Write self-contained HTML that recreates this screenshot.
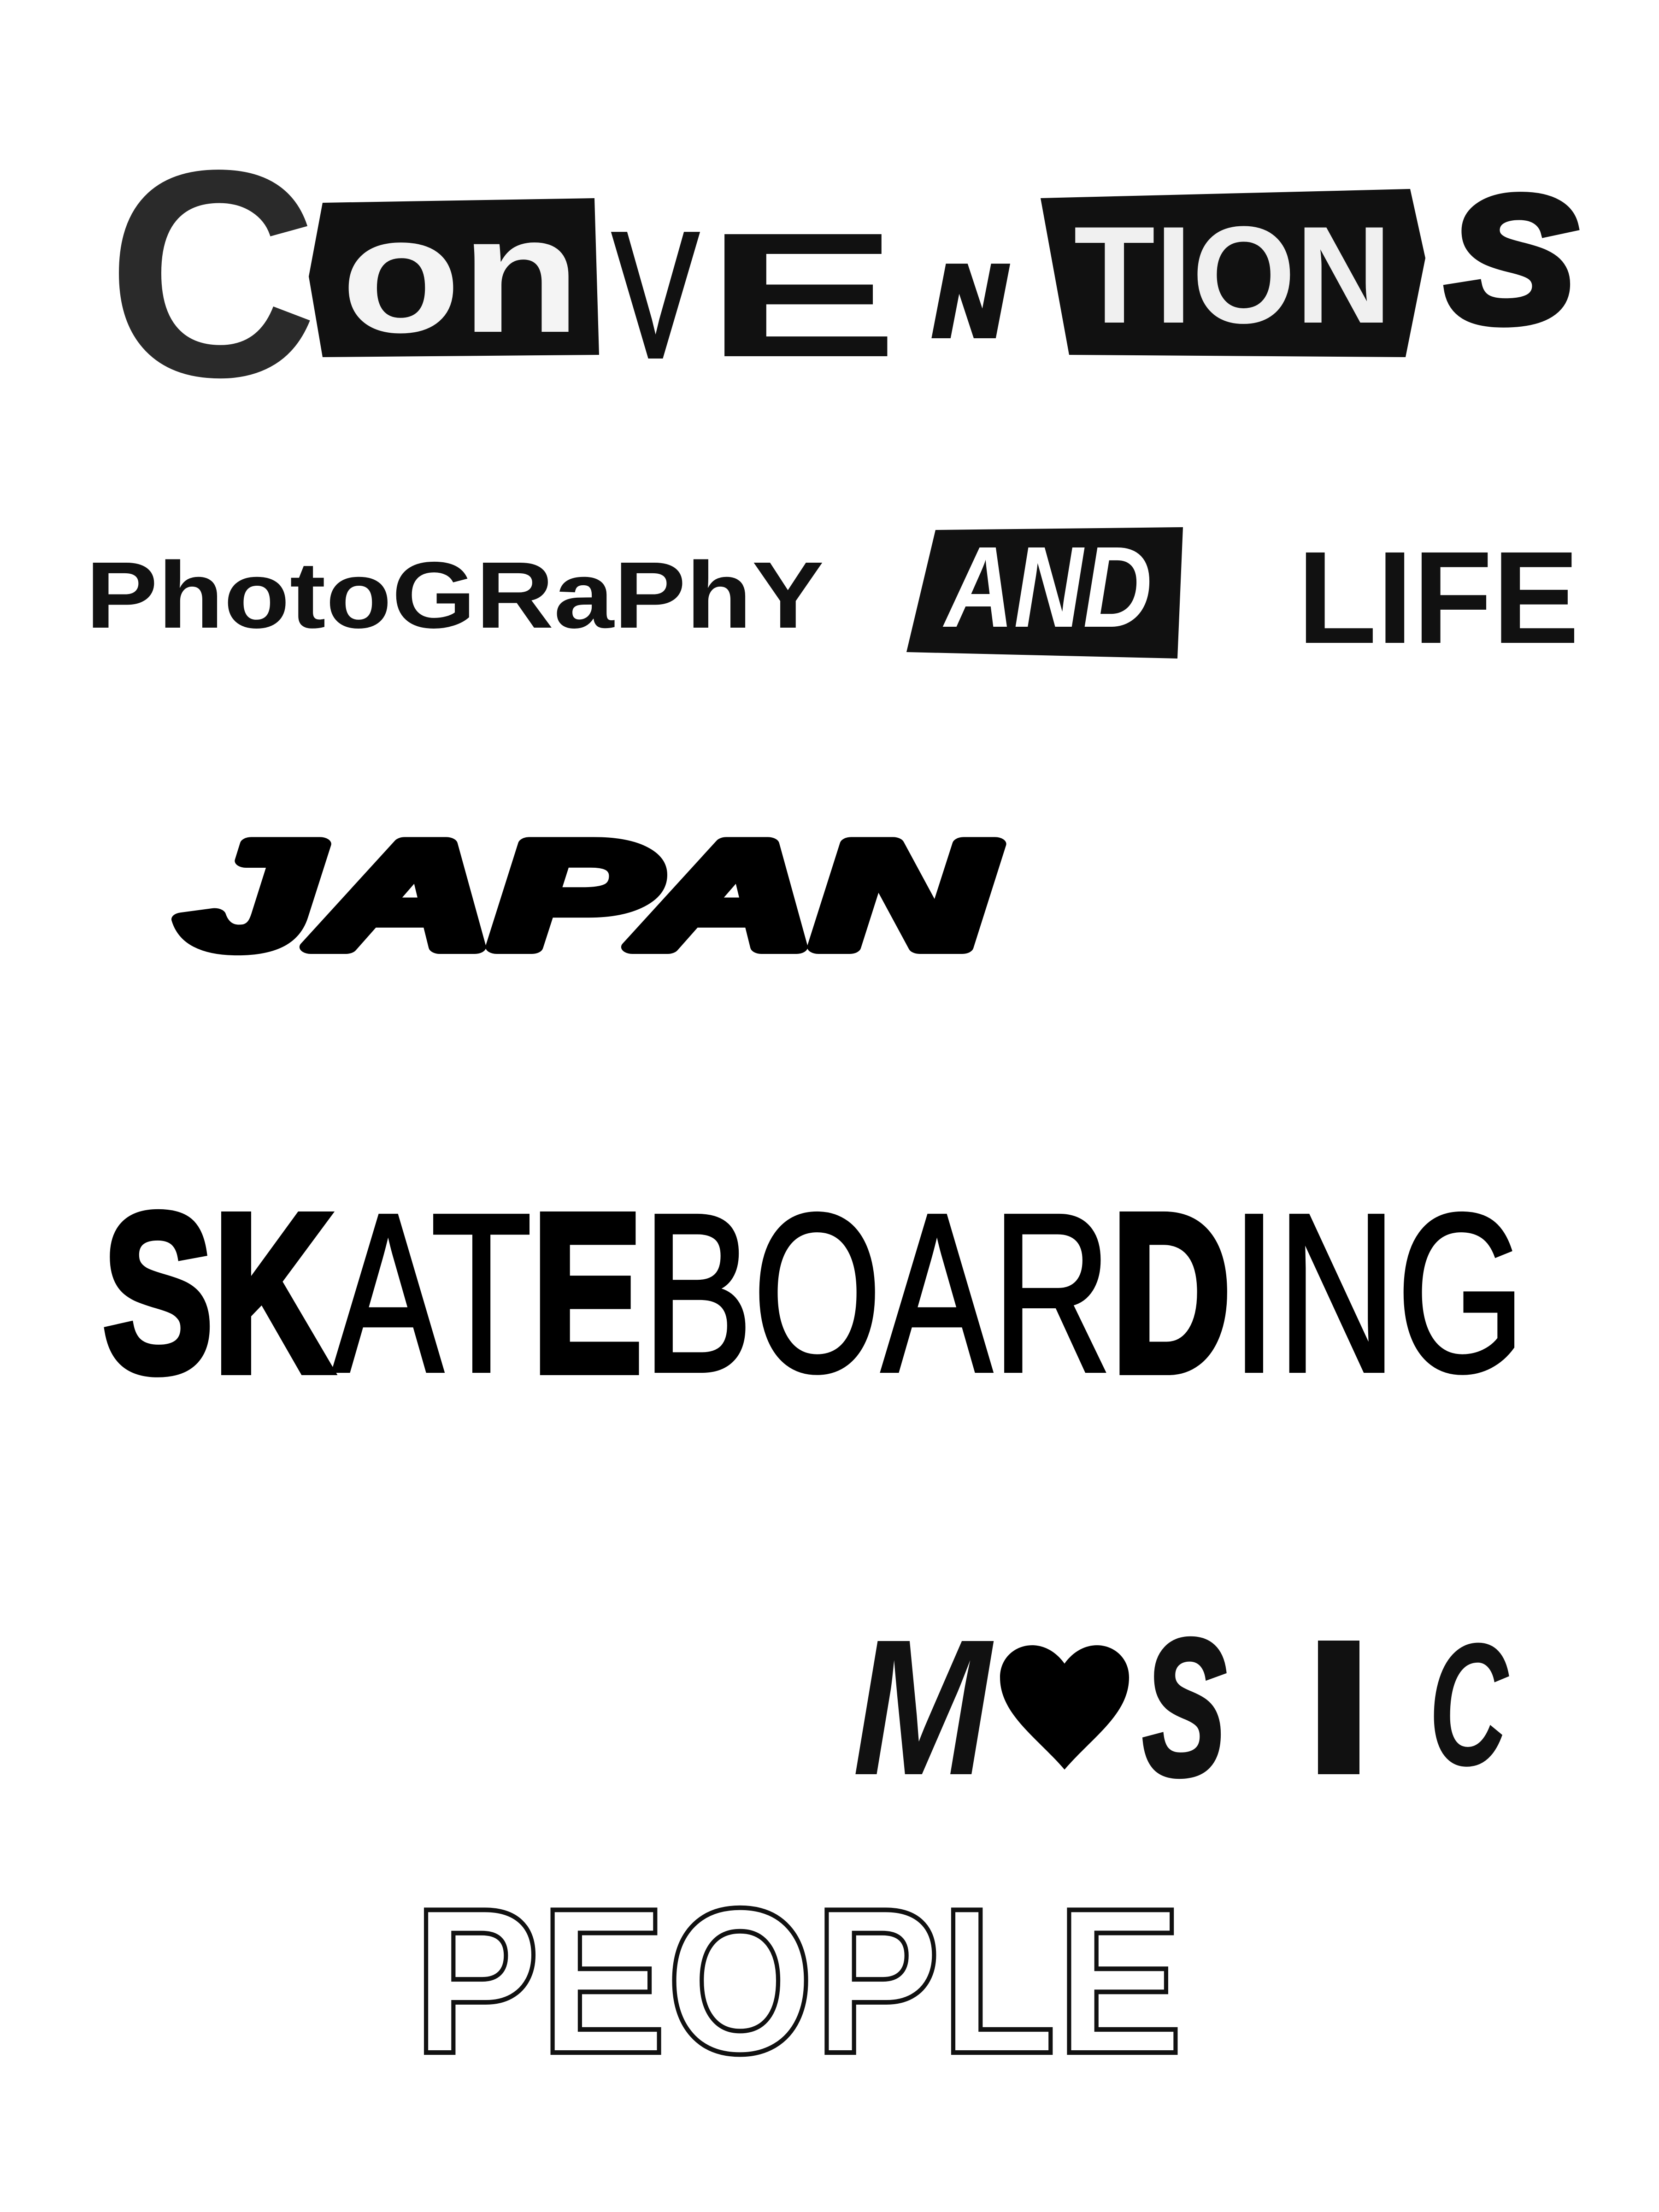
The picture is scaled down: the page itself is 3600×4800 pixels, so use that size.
<!DOCTYPE html>
<html><head><meta charset="utf-8"><style>
html,body{margin:0;padding:0;background:#fff;}
svg{display:block;}
text{font-family:"Liberation Sans",sans-serif;}
</style></head><body>
<svg width="3600" height="4800" viewBox="0 0 3600 4800" xmlns="http://www.w3.org/2000/svg">
<rect width="3600" height="4800" fill="#fff"/>
<!-- CONVENTIONS -->
<text x="232" y="815" font-size="640" font-weight="bold" fill="#2a2a2a" textLength="458" lengthAdjust="spacingAndGlyphs">C</text>
<polygon points="700,440 1290,430 1300,770 700,775 670,600" fill="#111"/>
<text x="740" y="720" font-size="360" font-weight="bold" fill="#f4f4f4" textLength="520" lengthAdjust="spacingAndGlyphs">on</text>
<text x="1330" y="773" font-size="385" fill="#111" stroke="#111" stroke-width="10" textLength="185" lengthAdjust="spacingAndGlyphs">V</text>
<text x="1530" y="773" font-size="385" font-weight="bold" fill="#111" textLength="420" lengthAdjust="spacingAndGlyphs">E</text>
<text x="2026" y="727" font-size="215" font-weight="bold" font-style="italic" fill="#111" stroke="#111" stroke-width="14" textLength="154" lengthAdjust="spacingAndGlyphs">N</text>
<polygon points="2258,430 3060,410 3093,560 3050,775 2320,770" fill="#111"/>
<text x="2330" y="700" font-size="300" font-weight="bold" fill="#f0f0f0" textLength="690" lengthAdjust="spacingAndGlyphs">TION</text>
<text x="3140" y="696" font-size="385" font-weight="bold" font-style="italic" fill="#111" stroke="#111" stroke-width="22" textLength="278" lengthAdjust="spacingAndGlyphs">S</text>
<!-- PHOTOGRAPHY AND LIFE -->
<text x="186" y="1362" font-size="205" font-weight="bold" fill="#111" textLength="1602" lengthAdjust="spacingAndGlyphs">PhotoGRaPhY</text>
<polygon points="2030,1150 2567,1144 2555,1429 1967,1415" fill="#111"/>
<text x="2050" y="1360" font-size="250" font-weight="bold" font-style="italic" fill="#fff" textLength="450" lengthAdjust="spacingAndGlyphs">AND</text>
<text x="2815" y="1395" font-size="285" font-weight="bold" fill="#111" textLength="612" lengthAdjust="spacingAndGlyphs">LIFE</text>
<!-- JAPAN -->
<text x="390" y="2055" font-size="325" font-weight="bold" font-style="italic" fill="#000" stroke="#000" stroke-width="30" stroke-linejoin="round" textLength="1760" lengthAdjust="spacingAndGlyphs">JAPAN</text>
<!-- SKATEBOARDING -->
<text x="223" y="2975" font-size="490" fill="#000" stroke="#000" stroke-width="8" textLength="3087" lengthAdjust="spacingAndGlyphs"><tspan font-weight="bold" stroke-width="18">SK</tspan>AT<tspan font-weight="bold" stroke-width="18">E</tspan>BOAR<tspan font-weight="bold" stroke-width="18">D</tspan>ING</text>
<!-- MUSIC -->
<text x="1850" y="3850" font-size="420" font-weight="bold" font-style="italic" fill="#111" textLength="300" lengthAdjust="spacingAndGlyphs">M</text>
<path d="M2310,3840 C2250,3770 2170,3720 2170,3640 C2170,3570 2260,3540 2310,3610 C2360,3540 2450,3570 2450,3640 C2450,3720 2370,3770 2310,3840 Z" fill="#000"/>
<text x="2480" y="3850" font-size="420" font-weight="bold" font-style="italic" fill="#111" stroke="#111" stroke-width="12" textLength="180" lengthAdjust="spacingAndGlyphs">S</text>
<rect x="2860" y="3560" width="90" height="290" fill="#111"/>
<text x="3100" y="3830" font-size="380" font-weight="bold" font-style="italic" fill="#111" textLength="172" lengthAdjust="spacingAndGlyphs">C</text>
<!-- PEOPLE -->
<text x="897" y="4454" font-size="450" font-weight="bold" fill="#fff" stroke="#111" stroke-width="10" textLength="1670" lengthAdjust="spacingAndGlyphs">PEOPLE</text>
</svg>
</body></html>
